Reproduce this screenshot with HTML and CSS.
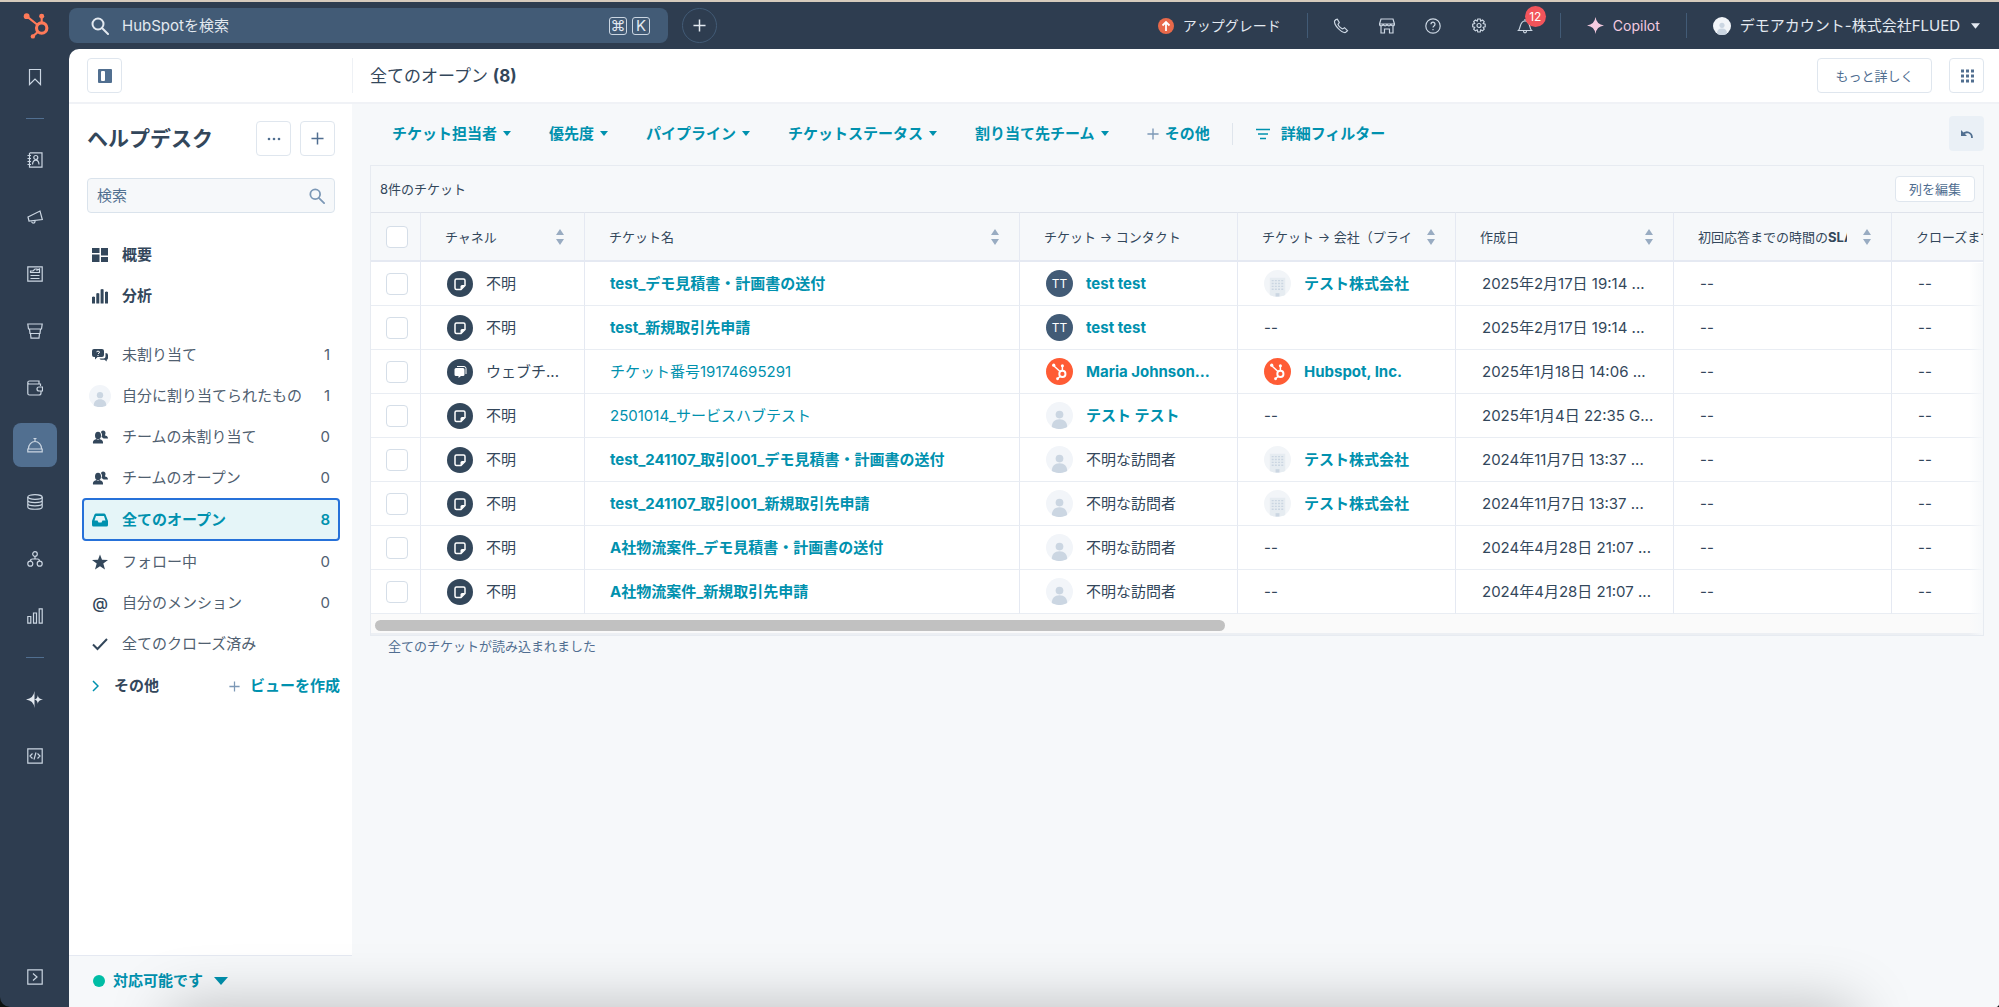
FILE: index.html
```
<!DOCTYPE html>
<html lang="ja">
<head>
    <meta charset="UTF-8">
    <meta name="viewport" content="width=device-width, initial-scale=1.0">
    <title>ヘルプデスク</title>
    <link rel="stylesheet" href="styles.css">
</head>
<body>

    <!-- icons -->
    <svg class="sprite" aria-hidden="true">
        <symbol id="sprocket" viewBox="0 0 26 26">
            <g fill="none" stroke="currentColor">
                <circle cx="18" cy="15.500" r="5" stroke-width="3"/>
                <path d="M18 11V4M13.500 12L4 4.500M14.500 19L10 23" stroke-width="2"/>
            </g>
            <g fill="currentColor">
                <circle cx="18" cy="4" r="2.400"/>
                <circle cx="3.500" cy="4" r="2.800"/>
                <circle cx="9.500" cy="23.500" r="2.100"/>
            </g>
        </symbol>
        <symbol id="search" viewBox="0 0 18 18">
            <circle cx="7" cy="7" r="5.500" fill="none" stroke="currentColor" stroke-width="2"/>
            <path d="M11 11l6 6" fill="none" stroke="currentColor" stroke-width="2" stroke-linecap="round"/>
        </symbol>
        <symbol id="plus" viewBox="0 0 14 14">
            <path d="M7 .5v13M.5 7h13" fill="none" stroke="currentColor" stroke-width="1.600"/>
        </symbol>
        <symbol id="caret" viewBox="0 0 8 5">
            <path d="M0 0h8L4 5z" fill="currentColor"/>
        </symbol>
        <symbol id="sort" viewBox="0 0 8 16">
            <path d="M4 0l4 6H0zM0 10h8l-4 6z" fill="currentColor"/>
        </symbol>
        <symbol id="person" viewBox="0 0 28 28">
            <circle cx="14" cy="14" r="14" fill="#f2f5f9"/>
            <circle cx="14" cy="13" r="4" fill="#cbd6e2"/>
            <path d="M6 26c0-5 3-8 8-8s8 3 8 8c-4.500 2.700-11.500 2.700-16 0z" fill="#cbd6e2"/>
        </symbol>
        <symbol id="building" viewBox="0 0 28 28">
            <circle cx="14" cy="14" r="14" fill="#f2f5f8"/>
            <path d="M6 26V8h16v18c-4 2-12 2-16 0z" fill="#e6ecf1"/>
            <path d="M8 11h12M8 14h12M8 17h12M8 20h12" stroke="#cbd6e2" stroke-width="1.500" stroke-dasharray="2 1.300"/>
            <path d="M12 24h4v3.500h-4z" fill="#cbd6e2"/>
        </symbol>
        <symbol id="note" viewBox="0 0 26 26">
            <circle cx="13" cy="13" r="13" fill="#33475b"/>
            <path d="M9.500 8h7q1.500 0 1.500 1.500v5L14 18.500H9.500Q8 18.500 8 17V9.500Q8 8 9.500 8z" fill="none" stroke="#fff" stroke-width="1.500"/>
            <path d="M18 14l-4.500 5v-3.500q0-1.500 1.500-1.500z" fill="#fff"/>
        </symbol>
        <symbol id="chat" viewBox="0 0 26 26">
            <circle cx="13" cy="13" r="13" fill="#33475b"/>
            <path d="M9 9h7q1.500 0 1.500 1.500v5q0 1.500-1.500 1.500h-2l-2.500 2v-2H9q-1.500 0-1.500-1.500v-5Q7.500 9 9 9z" fill="#fff"/>
            <path d="M10 7.500h7q2 0 2 2V15" fill="none" stroke="#fff"/>
        </symbol>
        <symbol id="hub" viewBox="0 0 28 28">
            <circle cx="14" cy="14" r="14" fill="#ff5c35"/>
            <g fill="none" stroke="#fff">
                <circle cx="17" cy="16.500" r="3.200" stroke-width="2"/>
                <path d="M17 13V8.500M14.500 14L8 8M14.800 18.800L12.500 21" stroke-width="1.500"/>
            </g>
            <g fill="#fff">
                <circle cx="17" cy="8" r="1.600"/>
                <circle cx="8" cy="7.500" r="1.700"/>
                <circle cx="12" cy="21.500" r="1.500"/>
            </g>
        </symbol>
        <symbol id="team" viewBox="0 0 16 16">
            <path d="M11 1.500a2.500 2.500 0 0 1 2.500 2.500c0 1-.5 1.500-.5 2.500 1.500.3 3 .8 3 3h-4.500c-1-1-2-1.200-2-1.700.7-1 .8-3-.5-4.500.3-1 1-1.800 2-1.800z" fill="currentColor"/>
            <ellipse cx="6" cy="6.500" rx="3" ry="3.800" fill="currentColor"/>
            <path d="M1 14.500C.5 11 3 10.500 4.500 10q1.500 1.500 3 0c1.500.5 4 1 3.500 4.500z" fill="currentColor"/>
        </symbol>
    </svg>

    <div class="app">
        <header class="topbar">
            <a class="logo" href="#" aria-label="HubSpot"><svg width="27" height="27"><use href="#sprocket"/></svg></a>
            <div class="global-search">
                <svg width="18" height="18"><use href="#search"/></svg>
                <input type="text" placeholder="HubSpotを検索" aria-label="HubSpotを検索">
                <kbd>⌘</kbd><kbd>K</kbd>
            </div>
            <button class="create" aria-label="作成"><svg width="13" height="13"><use href="#plus"/></svg></button>
            <div class="tools">
                <a class="upgrade" href="#">
                    <svg width="16" height="16" viewBox="0 0 16 16"><circle cx="8" cy="8" r="8" fill="#e8694a"/><path d="M8 13V4M4.500 7.500L8 4l3.500 3.500" fill="none" stroke="#fff" stroke-width="1.800"/></svg>
                    アップグレード
                </a>
                <span class="bar"></span>
                <div class="tool-icons">
                    <button aria-label="通話"><svg width="16" height="16" viewBox="0 0 16 16"><path d="M3 1.500L1.500 3C1 7 8 15 12.500 14.500l2-1.800-3-3-1.800 1.200C8 10.500 5.500 8 5 6.300L6.300 4.500 4.300 1.200z"/></svg></button>
                    <button aria-label="マーケットプレイス"><svg width="16" height="16" viewBox="0 0 16 16"><path d="M2 1h12l1.500 5H.5zM.5 6c0 2.500 3.500 2.500 3.700 0 .3 2.500 3.600 2.500 3.800 0 .3 2.500 3.600 2.500 3.800 0 .3 2.500 3.700 2.500 3.700 0M2 8v7h3.500v-4h5v4H14V8"/></svg></button>
                    <button aria-label="ヘルプ"><svg width="16" height="16" viewBox="0 0 16 16"><circle cx="8" cy="8" r="7.200"/><path d="M6 6.300C6 3.500 10 3.500 10 6.200 10 8 8 7.800 8 9.500M8 11v1.300"/></svg></button>
                    <button aria-label="設定"><svg width="16" height="16" viewBox="0 0 16 16"><path d="M6.800 1h2.400l.5 2 1.800-1 1.700 1.700-1 1.800 2 .6v2.600l-2 .6 1 1.800-1.700 1.700-1.800-1-.5 2.200H6.800l-.6-2.200-1.800 1-1.700-1.700 1-1.800-2-.6V6.100l2-.6-1-1.800L4.400 2l1.800 1z"/><circle cx="8" cy="7.500" r="2"/></svg></button>
                    <button class="bell" aria-label="通知"><svg width="16" height="16" viewBox="0 0 16 16"><path d="M1.500 12.500C4 10 2.500 3 8 3s4 7 6.500 9.500zM6.500 13c0 2.500 3 2.500 3 0M8 3V1"/></svg><span class="badge">12</span></button>
                </div>
                <span class="bar"></span>
                <a class="copilot" href="#">
                    <svg width="17" height="17" viewBox="0 0 18 18"><path d="M9 0q1 8 9 9-8 1-9 9-1-8-9-9 8-1 9-9z" fill="currentColor"/></svg>
                    Copilot
                </a>
                <span class="bar"></span>
                <button class="account">
                    <svg width="18" height="18"><use href="#person"/></svg>
                    デモアカウント-株式会社FLUED
                    <svg class="tri" width="9" height="6"><use href="#caret"/></svg>
                </button>
            </div>
        </header>

        <div class="body">
            <nav class="rail">
                <a href="#" aria-label="ブックマーク"><svg width="16" height="18" viewBox="0 0 16 18"><path d="M2.500 1.500h11v15L8 11l-5.500 5.500z"/></svg></a>
                <hr>
                <a href="#" aria-label="CRM"><svg width="16" height="16" viewBox="0 0 16 16"><path d="M3 .8h12v14.400H2.500V.8M.5 3.500H4M.5 6.500H4M.5 9.500H4M.5 12.500H4M5.500 12.500c.3-3 1.700-4.300 3.300-4.300s3 1.300 3.200 4.300"/><circle cx="8.800" cy="5.500" r="2"/></svg></a>
                <a href="#" aria-label="マーケティング"><svg width="16" height="16" viewBox="0 0 16 16"><path d="M1 8L13 2l2.300 8.500L2 12zM4.500 12c.3 3 4 2.500 3.500-.4"/></svg></a>
                <a href="#" aria-label="コンテンツ"><svg width="16" height="16" viewBox="0 0 16 16"><path d="M.8.8h14.400v14.400H.8zM3.500 6.500V5L6 5l2-2h2v1l2.500-1v3.500zM3.500 9.500h9M3.500 12.500h9"/></svg></a>
                <a href="#" aria-label="セールス"><svg width="16" height="16" viewBox="0 0 16 16"><path d="M.8 1h14.400l-.7 5H1.500zM2.500 6l.5 4.500h10l.5-4.500M3.500 10.500l.5 4.700h8l.5-4.700"/></svg></a>
                <a href="#" aria-label="コマース"><svg width="16" height="16" viewBox="0 0 16 16"><path d="M13.500 6V4H2.500Q.8 4 .8 2.500T2.500 1H12v3M.8 2.500V13.500Q.8 15 2.500 15h9.500q2 0 2-2v-2M15.500 7h-3.500a2 2 0 0 0 0 4h3.500z"/></svg></a>
                <a href="#" class="active" aria-label="サービス"><svg width="16" height="16" viewBox="0 0 16 16"><path d="M1.500 11.500a6.500 7 0 0 1 13 0M8 4.500V2M6.500 1.500h3M.8 12h14.400v2.800H.8z"/></svg></a>
                <a href="#" aria-label="データ管理"><svg width="16" height="16" viewBox="0 0 16 16"><ellipse cx="8" cy="3" rx="7.200" ry="2.300"/><path d="M.8 3v10c0 3 14.400 3 14.400 0V3M.8 6.300c0 3 14.400 3 14.400 0M.8 9.600c0 3 14.400 3 14.400 0"/></svg></a>
                <a href="#" aria-label="自動化"><svg width="16" height="16" viewBox="0 0 16 16"><circle cx="8" cy="3" r="2.300"/><circle cx="3.300" cy="12.700" r="2.500"/><circle cx="12.700" cy="12.700" r="2.500"/><path d="M8 5.500v2.500M3.500 10q0-2 2-2h5q2 0 2 2"/></svg></a>
                <a href="#" aria-label="レポート"><svg width="16" height="16" viewBox="0 0 16 16"><path d="M.8 8.500h3v6.700h-3zM6.500 5h3v10.200h-3zM12.200.8h3v14.400h-3z"/></svg></a>
                <hr>
                <a href="#" aria-label="Breeze"><svg width="17" height="17" viewBox="0 0 18 18"><path d="M9 0v18Q8 10 0 9q8-1 9-9zM12.500 4.500Q13 8.500 18 9q-5 .5-5.500 4.500Q12 9.500 9 9q3-.5 3.500-4.500z" class="fill"/></svg></a>
                <a href="#" aria-label="開発"><svg width="16" height="16" viewBox="0 0 16 16"><path d="M.8.8h14.400v14.400H.8zM5.500 5.500L3 8l2.500 2.500M10.500 5.500L13 8l-2.500 2.500M9 4.500l-2 7"/></svg></a>
                <a href="#" class="expand" aria-label="展開"><svg width="16" height="16" viewBox="0 0 16 16"><path d="M.8.8h14.400v14.400H.8zM6 4.500L10 8l-4 3.500"/></svg></a>
            </nav>

            <div class="page">
                <div class="page-header">
                    <div class="toggle-area">
                        <button class="btn-icon" aria-label="サイドバー切り替え"><svg width="14" height="14" viewBox="0 0 14 14"><rect width="14" height="14" rx="1" fill="#516f90"/><rect x="3" y="2" width="4" height="10" rx="1" fill="#fff"/></svg></button>
                    </div>
                    <h1>全てのオープン <b>(8)</b></h1>
                    <button class="btn more">もっと詳しく</button>
                    <button class="btn-icon" aria-label="アプリ"><svg width="14" height="14" viewBox="0 0 14 14"><path d="M1 2h13M1 7h13M1 12h13" fill="none" stroke="#516f90" stroke-width="3" stroke-dasharray="3 2"/></svg></button>
                </div>

                <div class="columns">
                    <aside class="sidebar">
                        <div class="side-head">
                            <h2>ヘルプデスク</h2>
                            <button class="btn-icon" aria-label="アクション"><svg width="14" height="4" viewBox="0 0 14 4"><g fill="#516f90"><circle cx="2" cy="2" r="1.300"/><circle cx="7" cy="2" r="1.300"/><circle cx="12" cy="2" r="1.300"/></g></svg></button>
                            <button class="btn-icon" aria-label="追加"><svg width="13" height="13"><use href="#plus"/></svg></button>
                        </div>
                        <div class="side-search">
                            <input type="text" placeholder="検索" aria-label="検索">
                            <svg width="16" height="16"><use href="#search"/></svg>
                        </div>
                        <ul class="views strong">
                            <li><a href="#"><span class="ico"><svg width="16" height="16" viewBox="0 0 16 16"><path d="M0 1h7.500v5H0zM0 7.500h7.500V15H0zM9 1h7v7.500H9zM9 10h7v5H9z" fill="currentColor"/></svg></span>概要</a></li>
                            <li><a href="#"><span class="ico"><svg width="16" height="16" viewBox="0 0 16 16"><path d="M0 15.500V9q1.500-1 3 0v6.500zM4.300 15.500V5.500q1.500-1 3 0v10zM8.600 15.500V1.500q1.500-1 3 0v14zM13 15.500V4q1.500-1 3 0v11.500z" fill="currentColor"/></svg></span>分析</a></li>
                        </ul>
                        <ul class="views">
                            <li><a href="#"><span class="ico"><svg width="16" height="16" viewBox="0 0 16 16"><path d="M2 2h8q2 0 2 2v4q0 2-2 2H5.500L3 12.500V10H2Q0 10 0 8V4q0-2 2-2z" fill="currentColor"/><path d="M13.500 6Q16 6 16 8v3q0 1.500-1.300 1.700v1.800l-2.200-1.700H9.500Q8 12.800 7.500 11.500h4q2 0 2-2z" fill="currentColor"/><path d="M4.500 4.800q1.500-1.500 3 0 .5 1-1.500 2M6 8v1" fill="none" stroke="#fff"/></svg></span>未割り当て<span class="count">1</span></a></li>
                            <li><a href="#"><span class="ico"><svg width="22" height="22"><use href="#person"/></svg></span>自分に割り当てられたもの<span class="count">1</span></a></li>
                            <li><a href="#"><span class="ico"><svg width="16" height="16"><use href="#team"/></svg></span>チームの未割り当て<span class="count">0</span></a></li>
                            <li><a href="#"><span class="ico"><svg width="16" height="16"><use href="#team"/></svg></span>チームのオープン<span class="count">0</span></a></li>
                            <li class="selected"><a href="#"><span class="ico"><svg width="16" height="16" viewBox="0 0 16 16"><path d="M4 1.500h8q1 0 1.500 1L16 9v4q0 1.500-1.500 1.500h-13Q0 14.500 0 13V9l2.500-6.500q.5-1 1.500-1zM4 4L2.500 8.500h3l1 2h3l1-2h3L12 4z" fill="currentColor" fill-rule="evenodd"/></svg></span>全てのオープン<span class="count">8</span></a></li>
                            <li><a href="#"><span class="ico"><svg width="16" height="16" viewBox="0 0 16 16"><path d="M8 .5l2 5.300 6 .2-4.700 3.600L13 15.500l-5-3.300-5 3.300 1.700-5.900L0 6l6-.2z" fill="currentColor"/></svg></span>フォロー中<span class="count">0</span></a></li>
                            <li><a href="#"><span class="ico at">@</span>自分のメンション<span class="count">0</span></a></li>
                            <li><a href="#"><span class="ico"><svg width="16" height="16" viewBox="0 0 16 16"><path d="M1 8.500l4.500 4.500L15 3" fill="none" stroke="currentColor" stroke-width="2"/></svg></span>全てのクローズ済み</a></li>
                        </ul>
                        <div class="side-more">
                            <button class="others"><svg width="7" height="12" viewBox="0 0 7 12"><path d="M1 1l5 5-5 5" fill="none" stroke="#0091ae" stroke-width="1.500"/></svg>その他</button>
                            <button class="create-view"><svg width="11" height="11"><use href="#plus"/></svg>ビューを作成</button>
                        </div>
                        <div class="side-foot">
                            <button class="status"><span class="dot"></span>対応可能です<svg width="14" height="8" viewBox="0 0 8 5" preserveAspectRatio="none"><path d="M0 0h8L4 5z" fill="currentColor"/></svg></button>
                        </div>
                    </aside>

                    <main class="content">
                        <div class="filters">
                            <button>チケット担当者<svg width="8" height="5"><use href="#caret"/></svg></button>
                            <button>優先度<svg width="8" height="5"><use href="#caret"/></svg></button>
                            <button>パイプライン<svg width="8" height="5"><use href="#caret"/></svg></button>
                            <button>チケットステータス<svg width="8" height="5"><use href="#caret"/></svg></button>
                            <button>割り当て先チーム<svg width="8" height="5"><use href="#caret"/></svg></button>
                            <button class="add"><svg width="12" height="12"><use href="#plus"/></svg>その他</button>
                            <button class="advanced"><svg width="14" height="12" viewBox="0 0 14 12"><path d="M0 1.500h14M2 6h10M4 10.500h6" fill="none" stroke="currentColor" stroke-width="1.500"/></svg>詳細フィルター</button>
                            <button class="undo" aria-label="元に戻す"><svg width="14" height="10" viewBox="0 0 14 10"><path d="M2.500 5.500C6 1.500 12 3 12 9" fill="none" stroke="#516f90" stroke-width="1.800"/><path d="M1 1v6h6z" fill="#516f90"/></svg></button>
                        </div>

                        <section class="panel">
                            <div class="panel-top">
                                <span>8件のチケット</span>
                                <button class="btn small">列を編集</button>
                            </div>
                            <div class="table-wrap">
                                <table>
                                    <colgroup>
                                        <col class="c-check"><col class="c-channel"><col class="c-name"><col class="c-std"><col class="c-std"><col class="c-std"><col class="c-std"><col class="c-std">
                                    </colgroup>
                                    <thead>
                                        <tr>
                                            <th><input type="checkbox" aria-label="全て選択"></th>
                                            <th><div class="th"><span>チャネル</span><svg width="8" height="16"><use href="#sort"/></svg></div></th>
                                            <th><div class="th"><span>チケット名</span><svg width="8" height="16"><use href="#sort"/></svg></div></th>
                                            <th><div class="th"><span>チケット → コンタクト</span></div></th>
                                            <th><div class="th"><span>チケット → 会社（プライマリー）</span><svg width="8" height="16"><use href="#sort"/></svg></div></th>
                                            <th><div class="th"><span>作成日</span><svg width="8" height="16"><use href="#sort"/></svg></div></th>
                                            <th><div class="th"><span>初回応答までの時間の<b>SLA</b></span><svg width="8" height="16"><use href="#sort"/></svg></div></th>
                                            <th><div class="th"><span>クローズまでの時間</span></div></th>
                                        </tr>
                                    </thead>
                                    <tbody>
                                        <tr>
                                            <td><input type="checkbox" aria-label="選択"></td>
                                            <td><div class="cell"><svg width="26" height="26"><use href="#note"/></svg>不明</div></td>
                                            <td><a href="#">test_デモ見積書・計画書の送付</a></td>
                                            <td><div class="cell"><span class="initials">TT</span><a href="#">test test</a></div></td>
                                            <td><div class="cell"><svg width="27" height="27"><use href="#building"/></svg><a href="#">テスト株式会社</a></div></td>
                                            <td>2025年2月17日 19:14 ...</td>
                                            <td>--</td>
                                            <td>--</td>
                                        </tr>
                                        <tr>
                                            <td><input type="checkbox" aria-label="選択"></td>
                                            <td><div class="cell"><svg width="26" height="26"><use href="#note"/></svg>不明</div></td>
                                            <td><a href="#">test_新規取引先申請</a></td>
                                            <td><div class="cell"><span class="initials">TT</span><a href="#">test test</a></div></td>
                                            <td>--</td>
                                            <td>2025年2月17日 19:14 ...</td>
                                            <td>--</td>
                                            <td>--</td>
                                        </tr>
                                        <tr>
                                            <td><input type="checkbox" aria-label="選択"></td>
                                            <td><div class="cell"><svg width="26" height="26"><use href="#chat"/></svg>ウェブチ...</div></td>
                                            <td><a class="read" href="#">チケット番号19174695291</a></td>
                                            <td><div class="cell"><svg width="27" height="27"><use href="#hub"/></svg><a href="#">Maria Johnson...</a></div></td>
                                            <td><div class="cell"><svg width="27" height="27"><use href="#hub"/></svg><a href="#">Hubspot, Inc.</a></div></td>
                                            <td>2025年1月18日 14:06 ...</td>
                                            <td>--</td>
                                            <td>--</td>
                                        </tr>
                                        <tr>
                                            <td><input type="checkbox" aria-label="選択"></td>
                                            <td><div class="cell"><svg width="26" height="26"><use href="#note"/></svg>不明</div></td>
                                            <td><a class="read" href="#">2501014_サービスハブテスト</a></td>
                                            <td><div class="cell"><svg width="27" height="27"><use href="#person"/></svg><a href="#">テスト テスト</a></div></td>
                                            <td>--</td>
                                            <td>2025年1月4日 22:35 G...</td>
                                            <td>--</td>
                                            <td>--</td>
                                        </tr>
                                        <tr>
                                            <td><input type="checkbox" aria-label="選択"></td>
                                            <td><div class="cell"><svg width="26" height="26"><use href="#note"/></svg>不明</div></td>
                                            <td><a href="#">test_241107_取引001_デモ見積書・計画書の送付</a></td>
                                            <td><div class="cell"><svg width="27" height="27"><use href="#person"/></svg>不明な訪問者</div></td>
                                            <td><div class="cell"><svg width="27" height="27"><use href="#building"/></svg><a href="#">テスト株式会社</a></div></td>
                                            <td>2024年11月7日 13:37 ...</td>
                                            <td>--</td>
                                            <td>--</td>
                                        </tr>
                                        <tr>
                                            <td><input type="checkbox" aria-label="選択"></td>
                                            <td><div class="cell"><svg width="26" height="26"><use href="#note"/></svg>不明</div></td>
                                            <td><a href="#">test_241107_取引001_新規取引先申請</a></td>
                                            <td><div class="cell"><svg width="27" height="27"><use href="#person"/></svg>不明な訪問者</div></td>
                                            <td><div class="cell"><svg width="27" height="27"><use href="#building"/></svg><a href="#">テスト株式会社</a></div></td>
                                            <td>2024年11月7日 13:37 ...</td>
                                            <td>--</td>
                                            <td>--</td>
                                        </tr>
                                        <tr>
                                            <td><input type="checkbox" aria-label="選択"></td>
                                            <td><div class="cell"><svg width="26" height="26"><use href="#note"/></svg>不明</div></td>
                                            <td><a href="#">A社物流案件_デモ見積書・計画書の送付</a></td>
                                            <td><div class="cell"><svg width="27" height="27"><use href="#person"/></svg>不明な訪問者</div></td>
                                            <td>--</td>
                                            <td>2024年4月28日 21:07 ...</td>
                                            <td>--</td>
                                            <td>--</td>
                                        </tr>
                                        <tr>
                                            <td><input type="checkbox" aria-label="選択"></td>
                                            <td><div class="cell"><svg width="26" height="26"><use href="#note"/></svg>不明</div></td>
                                            <td><a href="#">A社物流案件_新規取引先申請</a></td>
                                            <td><div class="cell"><svg width="27" height="27"><use href="#person"/></svg>不明な訪問者</div></td>
                                            <td>--</td>
                                            <td>2024年4月28日 21:07 ...</td>
                                            <td>--</td>
                                            <td>--</td>
                                        </tr>
                                    </tbody>
                                </table>
                            </div>
                            <div class="scroll-track"><div class="scroll-thumb"></div></div>
                        </section>
                        <p class="loaded">全てのチケットが読み込まれました</p>
                    </main>
                </div>
            </div>
        </div>
        <div class="dock-shadow"></div>
    </div>

</body>
</html>
```

FILE: styles.css
```
* {
    box-sizing: border-box;
}

body {
    margin: 0;
    background: #0c120f;
    color: #33475b;
    font-family: Inter, "Noto Sans CJK JP", sans-serif;
    font-size: 15px;
    line-height: 20px;
}

h1, h2, p, ul {
    margin: 0;
    padding: 0;
}

ul {
    list-style: none;
}

a {
    color: inherit;
    text-decoration: none;
}

button {
    padding: 0;
    border: 0;
    background: none;
    color: inherit;
    font: inherit;
    white-space: nowrap;
}

input {
    font: inherit;
}

svg {
    flex: none;
    display: block;
}

.sprite {
    display: none;
}

.app {
    position: relative;
    display: flex;
    flex-direction: column;
    min-height: 100vh;
    overflow: hidden;
    background: #2e3d50;
    border-top: 2px solid #d6cbbd;
    border-radius: 0 0 4px 10px;
}

/* top bar */
.topbar {
    display: flex;
    align-items: center;
    height: 47px;
    color: #e3e9f0;
}

.logo {
    display: flex;
    justify-content: center;
    width: 69px;
    padding-left: 3px;
    color: #ff7a59;
}

.global-search {
    display: flex;
    align-items: center;
    width: 599px;
    height: 35px;
    padding: 0 18px 0 22px;
    border-radius: 8px;
    background: #425b76;
}

.global-search input {
    flex: 1;
    min-width: 0;
    padding: 0 0 0 13px;
    border: 0;
    background: none;
    color: #e3e9f0;
}

.global-search input::placeholder {
    color: #e3e9f0;
    opacity: 1;
}

kbd {
    width: 18px;
    height: 18px;
    margin-left: 5px;
    border: 1px solid #cbd6e2;
    border-radius: 3px;
    font-family: Inter, "DejaVu Sans", sans-serif;
    font-size: 15px;
    line-height: 16px;
    text-align: center;
}

.create {
    display: flex;
    align-items: center;
    justify-content: center;
    width: 35px;
    height: 35px;
    margin-left: 14px;
    border: 1px solid #425b76;
    border-radius: 50%;
}

.tools {
    display: flex;
    align-items: center;
    margin-left: auto;
    padding-right: 19px;
}

.bar {
    width: 1px;
    height: 25px;
    background: #425b76;
}

.upgrade,
.copilot,
.account {
    display: flex;
    align-items: center;
    gap: 9px;
}

.upgrade {
    margin-right: 26px;
    font-size: 14px;
}

.tool-icons {
    display: flex;
    gap: 30px;
    margin: 0 27px 0 25px;
}

.tool-icons svg,
.rail svg {
    fill: none;
    stroke: #cbd6e2;
    stroke-width: 1.2px;
}

.bell {
    position: relative;
}

.badge {
    position: absolute;
    left: 8px;
    top: -12px;
    width: 21px;
    height: 21px;
    border-radius: 50%;
    background: #f2545b;
    color: #fff;
    font-size: 12px;
    line-height: 21px;
    text-align: center;
}

.copilot {
    margin: 0 26px;
    color: #f5cbe0;
    font-size: 14px;
}

.account {
    margin-left: 26px;
}

.account .tri {
    margin-left: 2px;
}

/* icon rail */
.body {
    flex: 1;
    display: flex;
}

.rail {
    display: flex;
    flex-direction: column;
    align-items: center;
    gap: 13px;
    width: 69px;
    padding: 6px 0 8px;
}

.rail a {
    display: flex;
    align-items: center;
    justify-content: center;
    width: 44px;
    height: 44px;
    border-radius: 8px;
}

.rail a.active {
    background: #516f90;
}

.rail .expand {
    margin-top: auto;
}

.rail .fill {
    fill: #e3e9f0;
    stroke: none;
}

.rail hr {
    width: 18px;
    margin: 6px 0;
    border: 0;
    border-top: 1px solid #516f90;
}

/* page */
.page {
    flex: 1;
    min-width: 0;
    display: flex;
    flex-direction: column;
    border-radius: 10px 0 0 0;
    overflow: hidden;
    background: #fff;
}

.page-header {
    display: flex;
    align-items: center;
    height: 55px;
    padding-right: 15px;
    border-bottom: 2px solid #f0f2f6;
}

.toggle-area {
    width: 284px;
    padding-left: 18px;
    border-right: 1px solid #eef1f5;
}

.page-header h1 {
    flex: 1;
    padding-left: 17px;
    font-size: 17px;
    font-weight: 400;
}

.page-header b {
    font-weight: 700;
}

.btn,
.btn-icon {
    border: 1px solid #dfe6ee;
    border-radius: 4px;
    background: #fff;
    color: #506e91;
}

.btn {
    font-size: 13px;
}

.more {
    width: 115px;
    height: 35px;
    margin-right: 17px;
}

.small {
    height: 26px;
    padding: 0 13px;
}

.btn-icon {
    display: flex;
    align-items: center;
    justify-content: center;
    width: 35px;
    height: 35px;
}

.columns {
    flex: 1;
    display: flex;
}

/* sidebar */
.sidebar {
    display: flex;
    flex-direction: column;
    width: 283px;
}

.side-head {
    display: flex;
    align-items: center;
    gap: 9px;
    padding: 17px 17px 0 18px;
}

.side-head h2 {
    flex: 1;
    font-size: 21px;
    font-weight: 600;
    line-height: 35px;
}

.side-search {
    display: flex;
    align-items: center;
    height: 35px;
    margin: 22px 17px 21px 18px;
    padding: 0 9px;
    border: 1px solid #dae3ec;
    border-radius: 4px;
    background: #f6f8fa;
    color: #7c98b6;
}

.side-search input {
    flex: 1;
    min-width: 0;
    padding: 0;
    border: 0;
    background: none;
}

.side-search input::placeholder {
    color: #516f90;
    opacity: 1;
}

.views {
    padding: 0 12px 0 13px;
}

.views.strong {
    margin-bottom: 18px;
    font-weight: 600;
}

.views a {
    display: flex;
    align-items: center;
    height: 41px;
    padding: 0 10px 0 7px;
    color: #506070;
}

.views.strong a {
    color: #33475b;
}

.views .ico {
    display: flex;
    justify-content: center;
    width: 22px;
    margin-right: 11px;
    color: #33475b;
}

.views .at {
    font-size: 16px;
    font-weight: 500;
}

.views .count {
    margin-left: auto;
}

.views .selected a {
    height: 43px;
    padding: 0 8px 0 5px;
    border: 2px solid #2671d9;
    border-radius: 4px;
    background: #e5f5f8;
    color: #0091ae;
    font-weight: 600;
}

.views .selected .ico {
    color: #0091ae;
}

.side-more {
    display: flex;
    align-items: center;
    justify-content: space-between;
    height: 44px;
    padding: 0 12px 0 23px;
    font-weight: 600;
}

.side-more button {
    display: flex;
    align-items: center;
}

.others {
    gap: 15px;
}

.create-view {
    gap: 10px;
    color: #0091ae;
}

.create-view svg,
.filters .add svg {
    color: #7c98b6;
}

.side-foot {
    margin-top: auto;
    height: 52px;
    padding: 15px 24px;
    border-top: 1px solid #e5e9f2;
    background: #f6f8fa;
}

.status {
    display: flex;
    align-items: center;
    color: #0091ae;
    font-weight: 600;
}

.status .dot {
    width: 12px;
    height: 12px;
    margin-right: 8px;
    border-radius: 50%;
    background: #00bda5;
}

.status svg {
    margin-left: 11px;
}

/* content */
.content {
    flex: 1;
    min-width: 0;
    padding: 12px 15px 0 18px;
    background: #f6f8fa;
}

.filters {
    display: flex;
    align-items: center;
    gap: 38px;
    padding-left: 22px;
    color: #0091ae;
    font-weight: 600;
}

.filters button {
    display: flex;
    align-items: center;
    gap: 6px;
}

.filters .advanced {
    gap: 11px;
    height: 22px;
    margin-left: -16px;
    padding-left: 23px;
    border-left: 1px solid #dfe5ec;
}

.filters .undo {
    justify-content: center;
    width: 35px;
    height: 35px;
    margin-left: auto;
    border-radius: 4px;
    background: #eaf0f6;
}

.panel {
    position: relative;
    margin-top: 14px;
    border: 1px solid #e7ebf1;
}

/* fade over the cut-off column */
.panel::after {
    content: "";
    position: absolute;
    right: 0;
    top: 97px;
    bottom: 0;
    width: 14px;
    background: linear-gradient(to right, rgba(246, 248, 250, 0), #f6f8fa);
}

.panel-top {
    display: flex;
    align-items: center;
    justify-content: space-between;
    height: 46px;
    padding: 0 8px 0 9px;
    font-size: 13px;
}

.table-wrap {
    overflow: hidden;
}

table {
    width: 1739px;
    table-layout: fixed;
    border-collapse: separate;
    border-spacing: 0;
}

.c-check {
    width: 50px;
}

.c-channel {
    width: 164px;
}

.c-name {
    width: 435px;
}

.c-std {
    width: 218px;
}

th,
td {
    padding: 0 0 0 26px;
    border-right: 1px solid #e5e9f2;
    border-bottom: 1px solid #e9edf3;
    text-align: left;
    white-space: nowrap;
}

th {
    height: 50px;
    padding-left: 24px;
    border-top: 1px solid #dfe3eb;
    border-bottom: 2px solid #e5e9f2;
    background: #f6f8fa;
    font-size: 13px;
    font-weight: 400;
}

td {
    height: 44px;
    background: #fff;
}

th:first-child,
td:first-child {
    padding: 0 0 0 15px;
}

td:nth-child(3) {
    padding-left: 25px;
}

td a {
    color: #0091ae;
    font-weight: 700;
}

td a.read {
    font-weight: 400;
}

.th {
    display: flex;
    align-items: center;
    justify-content: space-between;
    gap: 16px;
    padding-right: 20px;
}

.th span {
    overflow: hidden;
}

.th svg {
    color: #99acc2;
}

.cell {
    display: flex;
    align-items: center;
    gap: 13px;
}

.initials {
    width: 27px;
    height: 27px;
    border-radius: 50%;
    background: #425b76;
    color: #fff;
    font-size: 12px;
    line-height: 27px;
    text-align: center;
}

input[type="checkbox"] {
    appearance: none;
    display: block;
    width: 22px;
    height: 22px;
    margin: 0;
    border: 1px solid #d5dee8;
    border-radius: 4px;
    background: #fff;
}

.scroll-track {
    height: 21px;
    padding: 6px 4px 0;
    border-bottom: 2px solid #eceff3;
    background: #fafafa;
}

.scroll-thumb {
    width: 53%;
    height: 11px;
    border-radius: 6px;
    background: #c1c1c1;
}

.loaded {
    padding-left: 18px;
    color: #506e91;
    font-size: 13px;
}

/* soft shade along the lower edge of the window */
.dock-shadow {
    position: absolute;
    left: 170px;
    right: 145px;
    top: 100%;
    height: 60px;
    box-shadow: 0 0 60px rgba(0, 0, 0, .25);
    pointer-events: none;
}
```
